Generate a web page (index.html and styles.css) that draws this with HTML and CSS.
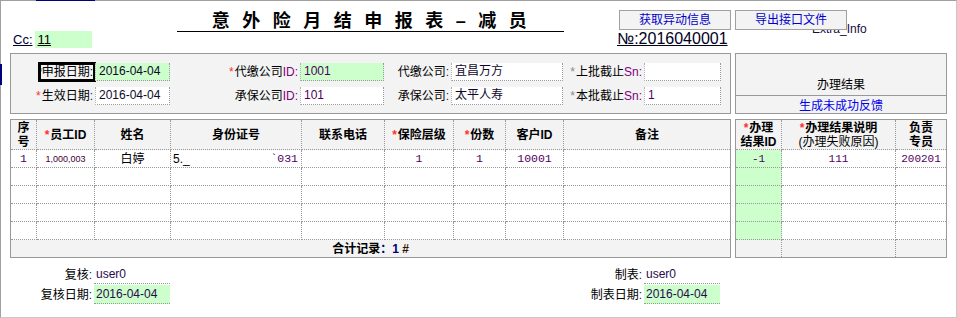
FILE: index.html
```html
<!DOCTYPE html>
<html lang="zh-CN">
<head>
<meta charset="utf-8">
<title>意外险月结申报表-减员</title>
<link rel="stylesheet" href="styles.css">
</head>
<body>
<div class="frame">
  <header class="top">
    <div class="top-left">
      <h1 class="title">意外险月结申报表<span class="dash">–</span>减员</h1>
      <div class="cc"><span class="cc-lbl">Cc:</span><span class="cc-val">11</span></div>
    </div>
    <div class="top-right">
      <div class="btns">
        <button class="btn" type="button">获取异动信息</button>
        <button class="btn" type="button">导出接口文件</button>
      </div>
      <div class="serial">№:2016040001</div>
    </div>
    <span class="extra">Extra_Info</span>
  </header>

  <div class="main">
    <div class="col-left">
      <section class="hbox">
        <label class="lbl"><span class="req req-focus">*</span><span class="focus">申报日期:</span></label>
        <span class="fld green">2016-04-04</span>
        <label class="lbl"><span class="req">*</span>代缴公司<span class="lat">ID:</span></label>
        <span class="fld green val">1001</span>
        <label class="lbl">代缴公司<span class="colon">:</span></label>
        <span class="fld">宜昌万方</span>
        <label class="lbl"><span class="req req-gray">*</span>上批截止<span class="lat">Sn:</span></label>
        <span class="fld"></span>

        <label class="lbl"><span class="req">*</span>生效日期<span class="colon">:</span></label>
        <span class="fld">2016-04-04</span>
        <label class="lbl">承保公司<span class="lat">ID:</span></label>
        <span class="fld val">101</span>
        <label class="lbl">承保公司<span class="colon">:</span></label>
        <span class="fld">太平人寿</span>
        <label class="lbl"><span class="req req-gray">*</span>本批截止<span class="lat">Sn:</span></label>
        <span class="fld val">1</span>
      </section>

      <div class="tbl tbl-main">
        <div class="th"><span>序<br>号</span></div>
        <div class="th"><span><span class="req">*</span>员工ID</span></div>
        <div class="th"><span>姓名</span></div>
        <div class="th"><span>身份证号</span></div>
        <div class="th"><span>联系电话</span></div>
        <div class="th"><span><span class="req">*</span>保险层级</span></div>
        <div class="th"><span><span class="req">*</span>份数</span></div>
        <div class="th"><span>客户ID</span></div>
        <div class="th"><span>备注</span></div>

        <div class="td num">1</div>
        <div class="td small">1,000,003</div>
        <div class="td">白婷</div>
        <div class="td idno"><span>5._</span><span class="num">`031</span></div>
        <div class="td"></div>
        <div class="td num">1</div>
        <div class="td num">1</div>
        <div class="td num">10001</div>
        <div class="td"></div>

        <div class="td"></div><div class="td"></div><div class="td"></div><div class="td"></div><div class="td"></div><div class="td"></div><div class="td"></div><div class="td"></div><div class="td"></div>
        <div class="td"></div><div class="td"></div><div class="td"></div><div class="td"></div><div class="td"></div><div class="td"></div><div class="td"></div><div class="td"></div><div class="td"></div>
        <div class="td"></div><div class="td"></div><div class="td"></div><div class="td"></div><div class="td"></div><div class="td"></div><div class="td"></div><div class="td"></div><div class="td"></div>
        <div class="td"></div><div class="td"></div><div class="td"></div><div class="td"></div><div class="td"></div><div class="td"></div><div class="td"></div><div class="td"></div><div class="td"></div>

        <div class="total"><span>合计记录<span class="cnt">：1</span> <span class="hash">#</span></span></div>
      </div>
    </div>

    <div class="col-right">
      <section class="rbox">
        <div class="rbox-title">办理结果</div>
        <div class="rbox-link">生成未成功反馈</div>
      </section>

      <div class="tbl tbl-res">
        <div class="th"><span><span class="req">*</span>办理<br>结果ID</span></div>
        <div class="th"><span><span class="req">*</span>办理结果说明<br><span class="sub">(办理失败原因)</span></span></div>
        <div class="th"><span>负责<br>专员</span></div>

        <div class="td green num">-1</div><div class="td num">111</div><div class="td num">200201</div>
        <div class="td green"></div><div class="td"></div><div class="td"></div>
        <div class="td green"></div><div class="td"></div><div class="td"></div>
        <div class="td green"></div><div class="td"></div><div class="td"></div>
        <div class="td green"></div><div class="td"></div><div class="td"></div>
        <div class="td tot"></div><div class="td tot"></div><div class="td tot"></div>
      </div>
    </div>
  </div>

  <footer class="foot">
    <span class="lbl">复核<span class="colon">:</span></span>
    <span class="ffld">user0</span>
    <span></span>
    <span class="lbl">制表<span class="colon">:</span></span>
    <span class="ffld">user0</span>

    <span class="lbl">复核日期<span class="colon">:</span></span>
    <span class="ffld green">2016-04-04</span>
    <span></span>
    <span class="lbl">制表日期<span class="colon">:</span></span>
    <span class="ffld green">2016-04-04</span>
  </footer>
</div>
</body>
</html>
```

FILE: styles.css
```css
* { box-sizing: border-box; }

html, body {
  margin: 0;
  background: #fff;
}

body {
  font-family: "Liberation Sans", "Noto Sans CJK SC", sans-serif;
  font-size: 12px;
  line-height: 14px;
  color: #000;
}

.frame {
  position: relative;
  width: 957px;
  height: 318px;
  border-top: 1px solid #a0a0a0;
  border-left: 1px solid #a0a0a0;
  border-right: 1px solid #c8c8c8;
  border-bottom: 1px solid #c8c8c8;
}

.frame::before {
  content: "";
  position: absolute;
  top: -1px;
  left: 35px;
  width: 59px;
  height: 1px;
  background: #000080;
}

.frame::after {
  content: "";
  position: absolute;
  top: 63px;
  left: -1px;
  width: 2px;
  height: 21px;
  background: #000080;
}

/* ---------- top ---------- */
.top {
  display: flex;
  height: 52px;
}

.top-left {
  margin-left: 9px;
  width: 607px;
}

.title {
  margin: 0 0 0 167px;
  width: 387px;
  height: 31px;
  padding: 11px 0 0 10px;
  font-size: 18px;
  line-height: 19px;
  font-weight: bold;
  letter-spacing: 12.5px;
  text-align: center;
  border-bottom: 1px solid #000;
  white-space: nowrap;
}

.cc {
  display: flex;
  align-items: center;
  height: 17px;
  margin: -1px 0 0 3px;
  font-size: 13px;
}

.cc-lbl {
  text-decoration: underline;
  color: #000030;
}

.cc-val {
  margin-left: 2px;
  width: 57px;
  height: 17px;
  padding-left: 3px;
  line-height: 17px;
  background: #ccffcc;
  text-decoration: underline;
}

.top-right {
  display: flex;
  flex-direction: column;
}

.btns {
  display: flex;
  gap: 4px;
  margin: 9px 0 0 2px;
}

.btn {
  position: relative;
  z-index: 1;
  appearance: none;
  width: 112px;
  height: 20px;
  padding: 0;
  margin: 0;
  border: 1px solid #a0a0a0;
  border-radius: 0;
  background: #f3f3f3;
  color: #0000cc;
  font: 12px/18px "Liberation Sans", "Noto Sans CJK SC", sans-serif;
}

.serial {
  font-size: 16px;
  line-height: 17px;
  text-decoration: underline;
  color: #000020;
}

.extra {
  position: absolute;
  z-index: 0;
  left: 811px;
  top: 21px;
  color: #1a0a40;
}

/* ---------- main ---------- */
.main {
  display: flex;
  gap: 4px;
  margin-left: 9px;
}

.col-left {
  width: 721px;
  display: flex;
  flex-direction: column;
  gap: 5px;
}

.col-right {
  width: 212px;
  display: flex;
  flex-direction: column;
  gap: 5px;
}

.hbox {
  height: 61px;
  padding: 9px 0 8px 0;
  border: 1px solid #999;
  background: #f3f3f3;
  display: grid;
  grid-template-columns: 84px 75px 130px 84px 67px 112px 81px 77px;
  grid-auto-rows: 18px;
  row-gap: 6px;
}

.lbl {
  display: flex;
  align-items: center;
  justify-content: flex-end;
  padding-right: 2px;
  white-space: nowrap;
}

.req {
  color: #ff3030;
  margin-right: 1px;
}

.req-gray { color: #8a8a8a; }
.req-focus { color: #00a0a0; }

.focus {
  display: inline-block;
  line-height: 14px;
  padding-left: 1px;
  margin-left: -3px;
  outline: 3px solid #000;
}

.lat { color: #800080; }
.colon { color: #202070; }

.fld {
  height: 18px;
  padding-left: 3px;
  line-height: 17px;
  background: #fff;
  border-left: 1px dotted #b0b0b0;
  border-right: 1px dotted #999;
  border-bottom: 1px dotted #999;
  color: #10082a;
  white-space: nowrap;
  overflow: hidden;
}

.green { background: #ccffcc; }
.val { color: #500060; }

/* ---------- results box ---------- */
.rbox {
  height: 61px;
  border: 1px solid #999;
  background: #f3f3f3;
  display: flex;
  flex-direction: column;
}

.rbox-title {
  height: 42px;
  display: flex;
  align-items: flex-end;
  justify-content: center;
  padding-bottom: 3px;
  border-bottom: 1px solid #999;
}

.rbox-link {
  padding-top: 3px;
  text-align: center;
  color: #0000ee;
}

/* ---------- tables ---------- */
.tbl {
  display: grid;
  border: 1px solid #999;
  grid-template-rows: 30px repeat(5, 18px) 17px;
}

.tbl-main {
  grid-template-columns: 26px 58px 76px 131px 83px 69px 52px 58px 166px;
}

.tbl-res {
  grid-template-columns: 46px 114px 50px;
}

.th, .td {
  display: flex;
  align-items: center;
  justify-content: center;
  text-align: center;
  border-right: 1px dotted #999;
  border-bottom: 1px dotted #999;
  white-space: nowrap;
}

.th {
  background: #f3f3f3;
  font-weight: bold;
  line-height: 14px;
}

.th .sub { font-weight: normal; }

.td {
  background: #fff;
}

.tbl-main > :nth-child(9n),
.tbl-res > :nth-child(3n) {
  border-right: none;
}

.td.green { background: #ccffcc; }

.num {
  font-family: "Liberation Mono", monospace;
  font-size: 11.5px;
  color: #500060;
}

.tbl-res .num { font-size: 11px; }

.small {
  font-size: 9px;
  color: #400030;
}

.idno {
  justify-content: space-between;
  padding: 0 3px 0 2px;
}

.td.tot {
  background: #f3f3f3;
  border-bottom: none;
}

.total {
  grid-column: 1 / -1;
  display: flex;
  align-items: center;
  justify-content: center;
  background: #f3f3f3;
  font-weight: bold;
  white-space: pre;
}

.cnt { color: #000070; }
.hash { color: #301000; }

/* ---------- footer ---------- */
.foot {
  display: grid;
  margin: 7px 0 0 9px;
  grid-template-columns: 84px 76px 393px 81px 76px;
  grid-template-rows: 19px 19px;
  row-gap: 1px;
}

.ffld {
  padding-left: 2px;
  line-height: 18px;
  border-bottom: 1px dotted #999;
  color: #2a0a50;
}
```
